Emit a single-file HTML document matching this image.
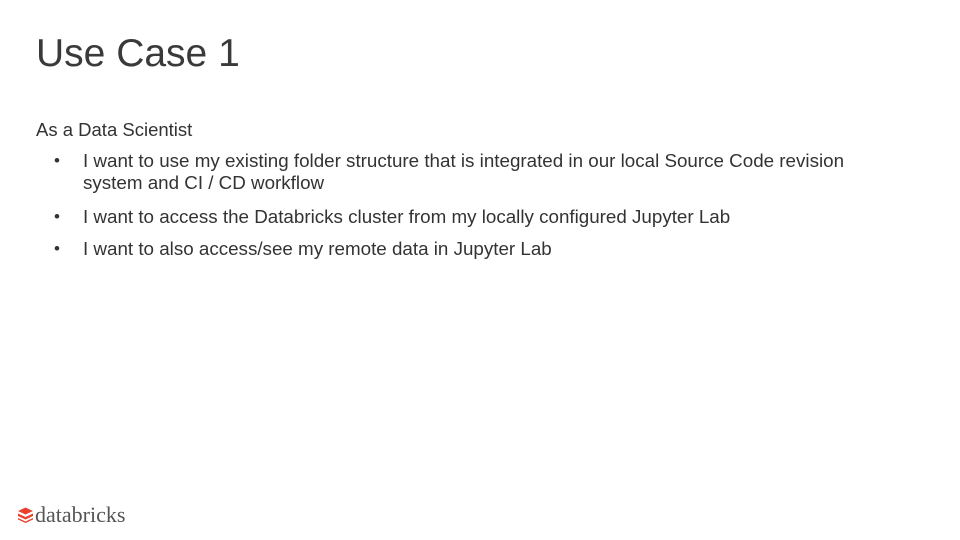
<!DOCTYPE html>
<html><head><style>
body{margin:0;width:960px;height:540px;background:#fff;position:relative;font-family:"Liberation Sans",sans-serif;color:#333;overflow:hidden}
.t{position:absolute;left:36px;top:32px;font-size:39px;color:#3a3a3a}
.s{position:absolute;left:36px;top:119px;font-size:18.5px}
.b{position:absolute;left:83px;font-size:18.8px;line-height:22px}
.d{position:absolute;left:54px;font-size:17px}
.logo{position:absolute;left:35px;top:502px;font-family:"Liberation Serif",serif;font-size:22px;color:#555}
</style></head><body>
<div class="t">Use Case 1</div>
<div class="s">As a Data Scientist</div>
<div class="d" style="top:151px">•</div>
<div class="b" style="top:150px">I want to use my existing folder structure that is integrated in our local Source Code revision<br>system and CI / CD workflow</div>
<div class="d" style="top:207px">•</div>
<div class="b" style="top:206px">I want to access the Databricks cluster from my locally configured Jupyter Lab</div>
<div class="d" style="top:239px">•</div>
<div class="b" style="top:238px">I want to also access/see my remote data in Jupyter Lab</div>
<svg style="position:absolute;left:17px;top:507px" width="17" height="16" viewBox="0 0 17 16">
<path d="M8.5 0.5L16 4 8.5 7.5 1 4Z" fill="#e8412c"/>
<path d="M1 6.5L8.5 10 16 6.5V9L8.5 12.5 1 9Z" fill="#e8412c"/>
<path d="M1 11L8.5 14.5 16 11V12.5L8.5 16 1 12.5Z" fill="#e8412c"/>
</svg>
<div class="logo">databricks</div>
</body></html>
